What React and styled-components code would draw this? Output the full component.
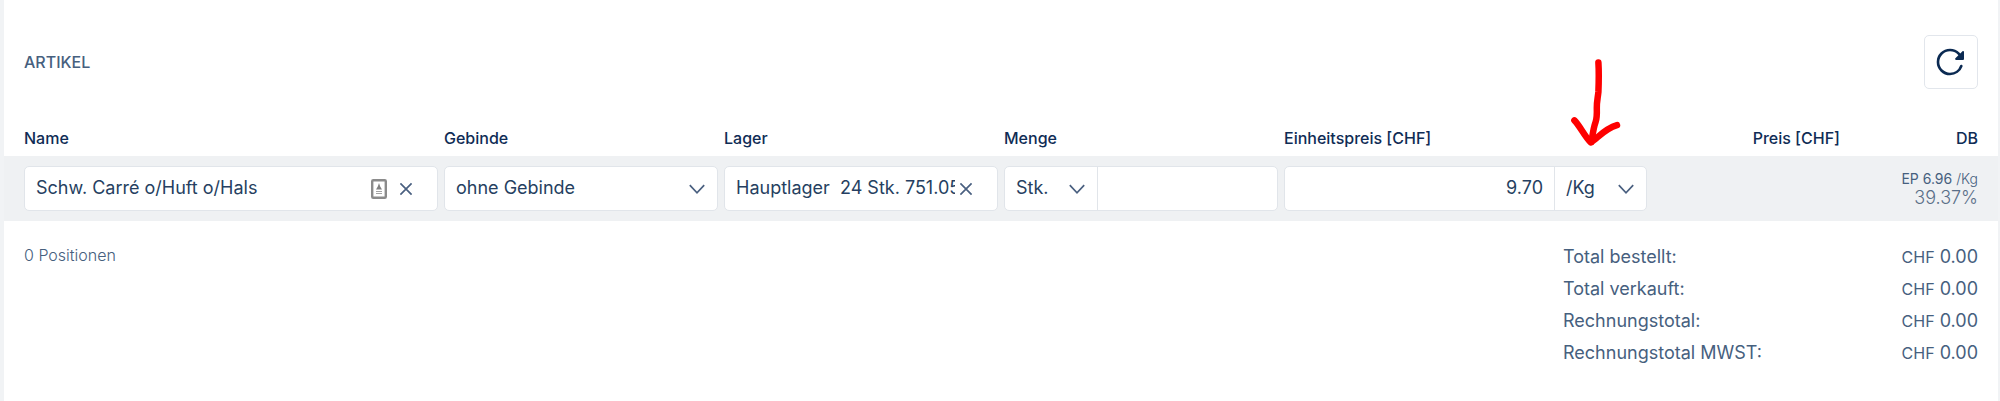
import { useState } from 'react';
import styled, { createGlobalStyle } from 'styled-components';
import { IoReload } from 'react-icons/io5';

const GlobalStyle = createGlobalStyle`
  * {
    box-sizing: border-box;
  }

  body {
    margin: 0;
    background-color: #f1f3f5;
    color: #263f61;
    font-family: Inter, 'Liberation Sans', sans-serif;
    font-size: 18px;
  }

  input, select, button {
    font: inherit;
    color: inherit;
  }
`;

const Card = styled.main`
  min-height: 100vh;
  margin: 0 2px 0 4px;
  padding-top: 35px;
  background-color: #fff;
`;

const Header = styled.header`
  display: flex;
  align-items: center;
  justify-content: space-between;
  padding: 0 20px;
`;

const Title = styled.h2`
  margin: 0;
  color: #46607e;
  font-size: 16px;
  font-weight: 500;
  line-height: 24px;
  text-transform: uppercase;
`;

const RefreshButton = styled.button`
  display: flex;
  align-items: center;
  justify-content: center;
  width: 54px;
  height: 54px;
  padding: 0;
  border: 1px solid #e2e6ec;
  border-radius: 5px;
  background-color: #fff;
  color: #0b2a52;

  path:first-child {
    stroke-width: 42px;
  }
`;

const Table = styled.table`
  display: block;
  margin-top: 37px;

  thead, tbody {
    display: block;
  }
`;

const Row = styled.tr`
  display: grid;
  grid-template-columns: 414fr 274fr 274fr 274fr 363fr 187fr 132fr;
  column-gap: 6px;
  align-items: center;
  padding: ${({ $filled }) => ($filled ? '10px 20px' : '0 20px 6px')};
  background-color: ${({ $filled }) => ($filled ? '#eff1f3' : 'transparent')};
`;

const HeadCell = styled.th`
  position: relative;
  padding: 0;
  color: #0f2c55;
  font-size: 16px;
  font-weight: 500;
  line-height: 24px;
  text-align: ${({ $right }) => ($right ? 'right' : 'left')};
`;

const Cell = styled.td`
  min-width: 0;
  padding: 0;
  text-align: right;
`;

const Field = styled.div`
  display: flex;
  align-items: center;
  height: 45px;
  border: 1px solid #e1e5ea;
  border-radius: 5px;
  background-color: #fff;
  overflow: hidden;
`;

const Input = styled.input`
  flex: 1;
  min-width: 0;
  height: 100%;
  padding: 0 0 2px 11px;
  border: 0;
  outline: 0;
  background: transparent;
`;

const NumberInput = styled(Input)`
  padding: 0 11px 2px;
  text-align: right;
`;

const SelectBox = styled.div`
  display: flex;
  position: relative;
  flex: ${({ $compact }) => ($compact ? '0 0 92px' : '1')};
  height: 100%;

  & + input, input + & {
    border-left: 1px solid #e1e5ea;
  }

  svg {
    position: absolute;
    top: 14px;
    right: 12px;
    pointer-events: none;
  }
`;

const Select = styled.select`
  appearance: none;
  width: 100%;
  padding: 0 36px 2px 11px;
  border: 0;
  outline: 0;
  background: transparent;
`;

const ClearButton = styled.button`
  display: flex;
  margin: 0 24px 0 4px;
  padding: 0;
  border: 0;
  background: transparent;
`;

const ContactButton = styled(ClearButton)`
  margin-right: 8px;
`;

const Margin = styled.div`
  color: #5a6f88;
  font-size: 18px;
  font-weight: 300;
  line-height: 20px;
`;

const UnitPrice = styled.div`
  color: #46607e;
  font-size: 14px;
  line-height: 18px;
`;

const Unit = styled.span`
  font-weight: 300;
`;

const Footer = styled.footer`
  display: flex;
  justify-content: space-between;
  padding: 20px 20px 0;
  color: #46607e;
`;

const Count = styled.p`
  margin: 0;
  font-size: 16px;
  font-weight: 300;
  line-height: 28px;
`;

const Totals = styled.dl`
  width: 415px;
  margin: 0;
`;

const Total = styled.div`
  display: flex;
  justify-content: space-between;
  line-height: 32px;

  dd {
    margin: 0;
  }
`;

const Currency = styled.span`
  font-size: 16px;
`;

const Arrow = styled.svg`
  position: absolute;
  top: -68px;
  left: 284px;
  pointer-events: none;
`;

const totals = ['Total bestellt:', 'Total verkauft:', 'Rechnungstotal:', 'Rechnungstotal MWST:'];

function Chevron() {
  return (
    <svg width="16" height="16" viewBox="0 0 16 16" fill="none" stroke="#4a6080" strokeWidth="1.7">
      <path d="M0.8 4.2L8 11.8L15.2 4.2" />
    </svg>
  );
}

function Cross() {
  return (
    <svg width="14" height="14" viewBox="0 0 14 14" fill="none" stroke="#4a6080" strokeWidth="1.7">
      <path d="M1.4 1.4L12.6 12.6M12.6 1.4L1.4 12.6" />
    </svg>
  );
}

function ContactIcon() {
  return (
    <svg width="16" height="20" viewBox="0 0 16 20">
      <rect x="1.2" y="1.2" width="13.6" height="17.6" rx="1" fill="#fff" stroke="#8b8b8b" strokeWidth="2.4" />
      <path d="M8 4L9.2 7.5L11 10.5H5L6.8 7.5Z" fill="#808080" />
      <path d="M5 12.5H11M5 14.5H11" stroke="#a3a3a3" strokeWidth="1" />
    </svg>
  );
}

function ComboField({ label, initial, contact }) {
  const [value, setValue] = useState(initial);

  return (
    <Field>
      <Input aria-label={label} value={value} onChange={(event) => setValue(event.target.value)} />
      {contact && (
        <ContactButton type="button" aria-label="Kontakt">
          <ContactIcon />
        </ContactButton>
      )}
      <ClearButton type="button" aria-label="Leeren" onClick={() => setValue('')}>
        <Cross />
      </ClearButton>
    </Field>
  );
}

function SelectField({ label, option, compact }) {
  return (
    <SelectBox $compact={compact}>
      <Select aria-label={label}>
        <option>{option}</option>
      </Select>
      <Chevron />
    </SelectBox>
  );
}

export default function App() {
  const [amount, setAmount] = useState('');
  const [price, setPrice] = useState('9.70');

  return (
    <>
      <GlobalStyle />
      <Card>
        <Header>
          <Title>Artikel</Title>
          <RefreshButton type="button" aria-label="Aktualisieren">
            <IoReload size={32} />
          </RefreshButton>
        </Header>
        <Table>
          <thead>
            <Row>
              <HeadCell>Name</HeadCell>
              <HeadCell>Gebinde</HeadCell>
              <HeadCell>Lager</HeadCell>
              <HeadCell>Menge</HeadCell>
              <HeadCell>
                Einheitspreis [CHF]
                <Arrow width="54" height="92" viewBox="0 0 54 92" fill="none" stroke="#fe0000" strokeWidth="6.5" strokeLinecap="round" strokeLinejoin="round">
                  <path d="M30.4 4.6C31 14 30.8 24 30.4 34C29.8 40 28.6 44 28.8 50C29 56 29 60 27.6 64C25.4 70 24.6 77 23.4 84" />
                  <path d="M6.4 62.4C12 68 17 79 22.8 84.4C29 81 36 71 49 67.2" />
                </Arrow>
              </HeadCell>
              <HeadCell $right>Preis [CHF]</HeadCell>
              <HeadCell $right>DB</HeadCell>
            </Row>
          </thead>
          <tbody>
            <Row $filled>
              <Cell>
                <ComboField label="Name" initial="Schw. Carré o/Huft o/Hals" contact />
              </Cell>
              <Cell>
                <Field>
                  <SelectField label="Gebinde" option="ohne Gebinde" />
                </Field>
              </Cell>
              <Cell>
                <ComboField label="Lager" initial="Hauptlager  24 Stk. 751.05 Kg" />
              </Cell>
              <Cell>
                <Field>
                  <SelectField label="Mengeneinheit" option="Stk." compact />
                  <NumberInput aria-label="Menge" value={amount} onChange={(event) => setAmount(event.target.value)} />
                </Field>
              </Cell>
              <Cell>
                <Field>
                  <NumberInput aria-label="Einheitspreis" value={price} onChange={(event) => setPrice(event.target.value)} />
                  <SelectField label="Preiseinheit" option="/Kg" compact />
                </Field>
              </Cell>
              <Cell />
              <Cell>
                <UnitPrice>
                  EP 6.96 <Unit>/Kg</Unit>
                </UnitPrice>
                <Margin>39.37%</Margin>
              </Cell>
            </Row>
          </tbody>
        </Table>
        <Footer>
          <Count>0 Positionen</Count>
          <Totals>
            {totals.map((label) => (
              <Total key={label}>
                <dt>{label}</dt>
                <dd>
                  <Currency>CHF</Currency> 0.00
                </dd>
              </Total>
            ))}
          </Totals>
        </Footer>
      </Card>
    </>
  );
}
